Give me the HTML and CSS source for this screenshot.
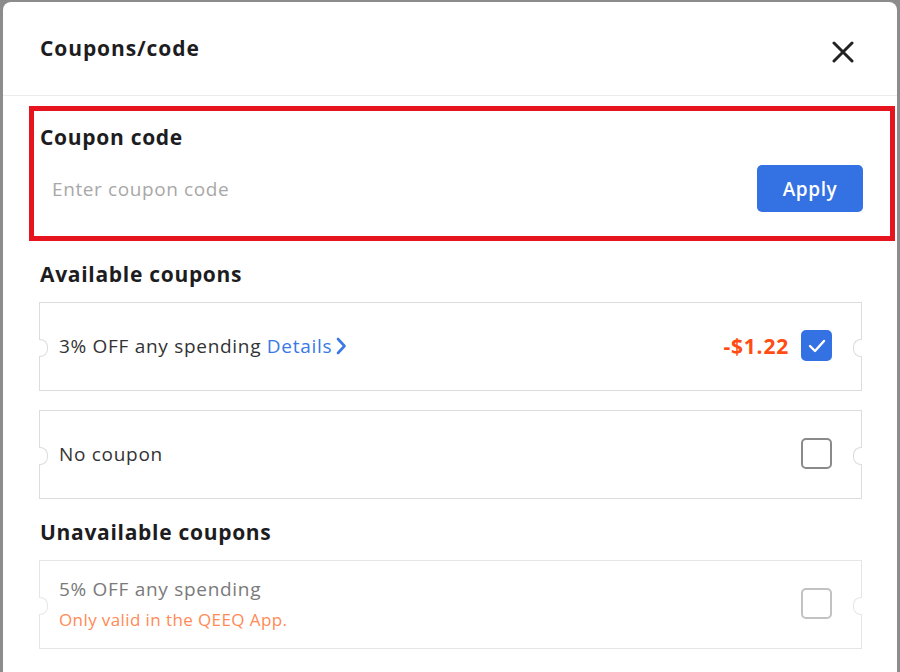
FILE: index.html
```html
<!DOCTYPE html>
<html>
<head>
<meta charset="utf-8">
<link rel="stylesheet" href="styles.css">
</head>
<body>
<div class="modal">
  <div class="header">
    <h1 class="title">Coupons/code</h1>
    <button class="close" aria-label="Close">
      <svg width="22" height="22" viewBox="0 0 22 22"><path d="M2 2 L20 20 M20 2 L2 20" stroke="#222" stroke-width="3" stroke-linecap="round" fill="none"/></svg>
    </button>
  </div>
  <div class="body">
    <section class="code-box">
      <h2 class="code-title">Coupon code</h2>
      <div class="code-row">
        <input class="code-input" type="text" placeholder="Enter coupon code">
        <button class="apply">Apply</button>
      </div>
    </section>
    <h2 class="section-title">Available coupons</h2>
    <div class="card">
      <div class="card-text">3% OFF any spending <a class="details" href="#">Details<svg width="12" height="18" viewBox="0 0 12 18"><path d="M3 2 L9.5 9 L3 16" stroke="#3a78e6" stroke-width="2.6" fill="none" stroke-linecap="round" stroke-linejoin="round"/></svg></a></div>
      <div class="card-right">
        <span class="amount">-$1.22</span>
        <span class="check checked"><svg width="20" height="16" viewBox="0 0 20 16"><path d="M3 8 L8 13 L17 3" stroke="#fff" stroke-width="2.4" fill="none" stroke-linecap="round" stroke-linejoin="round"/></svg></span>
      </div>
    </div>
    <div class="card">
      <div class="card-text">No coupon</div>
      <div class="card-right"><span class="check"></span></div>
    </div>
    <h2 class="section-title">Unavailable coupons</h2>
    <div class="card disabled">
      <div class="card-text">
        <div class="muted">5% OFF any spending</div>
        <div class="note">Only valid in the QEEQ App.</div>
      </div>
      <div class="card-right"><span class="check light"></span></div>
    </div>
  </div>
</div>
</body>
</html>
```
FILE: styles.css
```css
* { box-sizing: border-box; }
html, body { margin: 0; padding: 0; }
body {
  background: #8c8c8c;
  font-family: "Open Sans", Lato, "Liberation Sans", sans-serif;
  height: 672px;
  overflow: hidden;
}
.modal {
  margin: 2px 0 0 3px;
  width: 894px;
  height: 700px;
  background: #fff;
  border-radius: 8px 8px 0 0;
}
.header {
  height: 94px;
  border-bottom: 1px solid #ececec;
  display: flex;
  align-items: center;
  justify-content: space-between;
  padding: 0 43px 0 37px;
}
.title {
  margin: 0;
  margin-top: -2px;
  font-size: 21px;
  line-height: 24px;
  font-weight: 700;
  letter-spacing: 0.9px;
  color: #1d1d1f;
}
.close {
  border: 0;
  background: none;
  padding: 0;
  width: 22px;
  height: 22px;
  cursor: pointer;
  margin-top: 6px;
}
.close svg { display: block; }
.body {
  padding: 10px 35px 0 36px;
}
.code-box {
  margin: 0 -33px 0 -10px;
  border: 5px solid #e5141e;
  padding: 14px 27px 24px 6px;
}
.code-title, .section-title {
  margin: 0;
  font-size: 21px;
  line-height: 24px;
  font-weight: 700;
  letter-spacing: 0.7px;
  color: #1d1d1f;
}
.code-row {
  margin-top: 16px;
  display: flex;
  align-items: center;
  justify-content: space-between;
}
.code-input {
  border: 0;
  outline: none;
  font-family: inherit;
  font-size: 19px;
  letter-spacing: 0.6px;
  padding: 0 0 0 12px;
  flex: 1;
  color: #333;
}
.code-input::placeholder { color: #a8a8a8; }
.apply {
  width: 106px;
  height: 47px;
  border: 0;
  border-radius: 5px;
  background: #3471e3;
  color: #fff;
  font-family: inherit;
  font-size: 19px;
  letter-spacing: 0.6px;
  font-weight: 600;
}
.section-title {
  margin: 21px 0 16px 1px;
}
.card {
  position: relative;
  height: 89px;
  border: 1px solid #dcdcdc;
  display: flex;
  align-items: center;
  justify-content: space-between;
  padding: 0 29px 2px 19px;
  margin-bottom: 19px;
}
.card::before, .card::after {
  content: "";
  position: absolute;
  top: 50%;
  width: 8px;
  height: 16px;
  margin-top: -8px;
  background: #fff;
  border: 1px solid #dcdcdc;
}
.card::before {
  left: -1px;
  border-left: 0;
  border-radius: 0 8px 8px 0;
}
.card::after {
  right: -1px;
  border-right: 0;
  border-radius: 8px 0 0 8px;
}
.card.disabled, .card.disabled::before, .card.disabled::after { border-color: #e6e6e6; }
.card-text {
  font-size: 19px;
  line-height: 24px;
  letter-spacing: 0.7px;
  color: #333;
}
.details {
  color: #3a78e6;
  text-decoration: none;
}
.details svg { vertical-align: -2px; margin-left: 3px; }
.card-right {
  display: flex;
  align-items: center;
  gap: 12px;
}
.amount {
  color: #ff4c12;
  font-size: 21px;
  letter-spacing: 0.8px;
  font-weight: 700;
}
.check {
  width: 31px;
  height: 31px;
  border: 2px solid #8a8a8a;
  border-radius: 5px;
  display: flex;
  align-items: center;
  justify-content: center;
}
.check.checked {
  background: #3471e3;
  border-color: #3471e3;
}
.check.light { border-color: #c2c2c2; }
.muted { color: #7a7a7a; }
.note {
  color: #ff8a56;
  font-size: 17px;
  letter-spacing: 0.4px;
  line-height: 20px;
  margin-top: 9px;
}
```
